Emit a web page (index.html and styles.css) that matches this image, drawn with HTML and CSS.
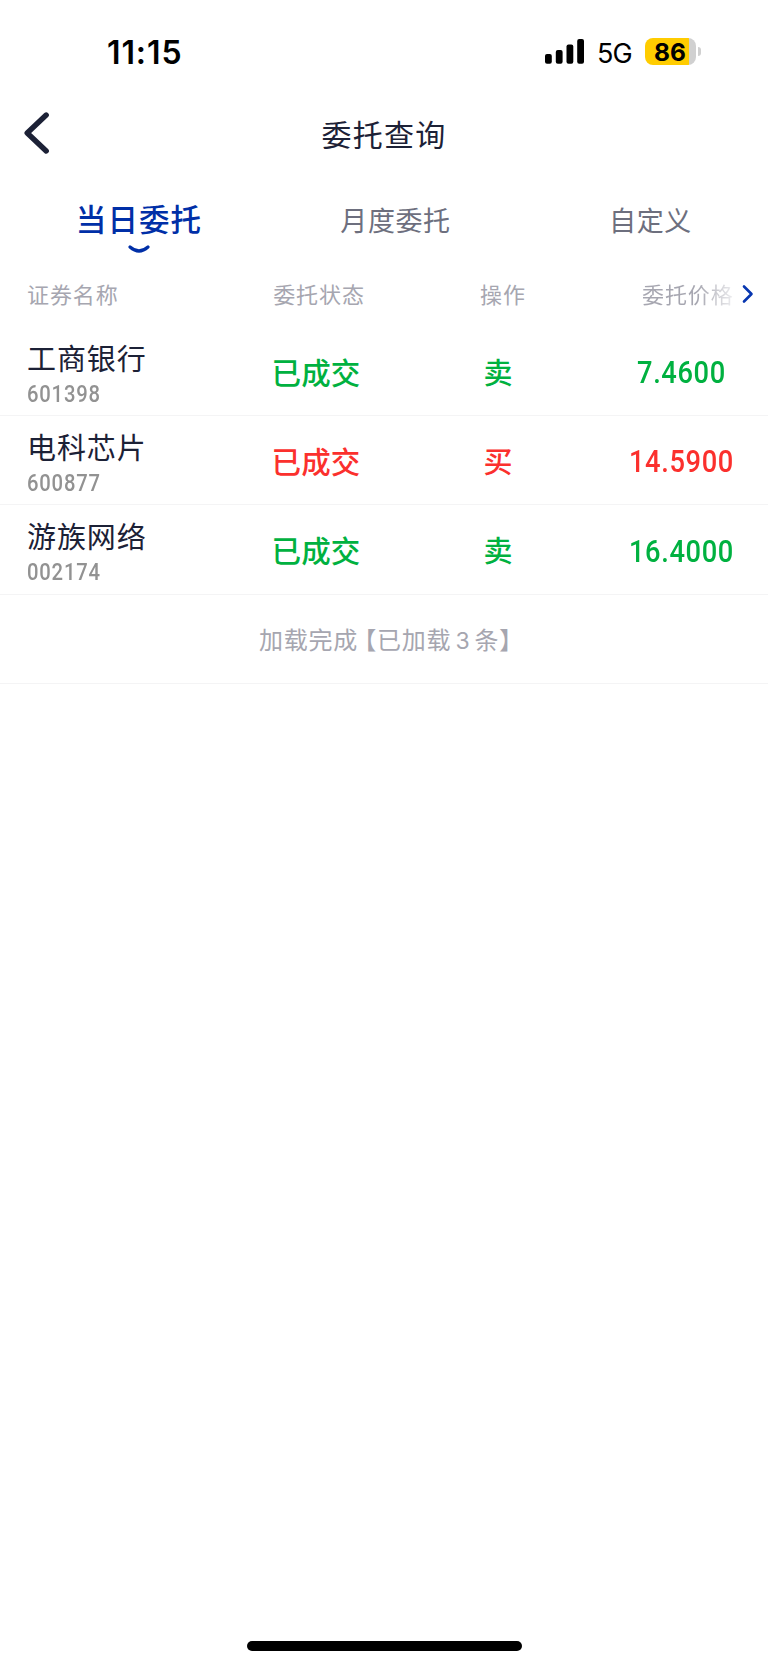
FILE: index.html
```html
<!DOCTYPE html>
<html lang="zh-CN">
<head>
    <meta charset="UTF-8">
    <meta name="viewport" content="width=device-width, initial-scale=1.0">
    <title>委托查询</title>
    <link rel="stylesheet" href="styles.css">
</head>
<body>
    <div class="status-bar">
        <span class="clock">11:15</span>
        <div class="status-icons">
            <svg class="signal" width="39" height="25" viewBox="0 0 39 25">
                <rect x="0" y="15" width="6.8" height="9.8" rx="2"/>
                <rect x="10.8" y="11" width="6.8" height="13.8" rx="2"/>
                <rect x="21.5" y="5.6" width="6.8" height="19.2" rx="2"/>
                <rect x="32.2" y="0" width="6.8" height="24.8" rx="2"/>
            </svg>
            <span class="network">5G</span>
            <div class="battery"><span>86</span></div>
            <div class="battery-cap"></div>
        </div>
    </div>

    <header>
        <a href="#" class="back">
            <svg width="26" height="42" viewBox="0 0 26 42">
                <path d="M22.2 3L3.2 21L22.2 39" fill="none" stroke="#1c2136" stroke-width="5.4" stroke-linecap="round" stroke-linejoin="round"/>
            </svg>
        </a>
        <h1>委托查询</h1>
    </header>

    <nav class="tabs">
        <a href="#day" class="tab active">当日委托
            <svg width="22" height="9" viewBox="0 0 22 9">
                <path d="M2 2Q11 10 20 2" fill="none" stroke="#002fa7" stroke-width="3.2" stroke-linecap="round"/>
            </svg>
        </a>
        <a href="#month" class="tab">月度委托</a>
        <a href="#custom" class="tab">自定义</a>
    </nav>

    <main>
        <div class="row table-head">
            <div class="name">证券名称</div>
            <div class="state">委托状态</div>
            <div class="action">操作</div>
            <div class="price">
                <span class="fade">委托价格</span>
                <svg width="12" height="20" viewBox="0 0 12 20">
                    <path d="M2 2.5L9.5 10L2 17.5" fill="none" stroke="#0736b0" stroke-width="2.6" stroke-linecap="round" stroke-linejoin="round"/>
                </svg>
            </div>
        </div>
        <div class="row order sell">
            <div class="name">工商银行<span class="code">601398</span></div>
            <div class="state">已成交</div>
            <div class="action">卖</div>
            <div class="price">7.4600</div>
        </div>
        <div class="row order buy">
            <div class="name">电科芯片<span class="code">600877</span></div>
            <div class="state">已成交</div>
            <div class="action">买</div>
            <div class="price">14.5900</div>
        </div>
        <div class="row order sell">
            <div class="name">游族网络<span class="code">002174</span></div>
            <div class="state">已成交</div>
            <div class="action">卖</div>
            <div class="price">16.4000</div>
        </div>
        <p class="loaded">加载完成<span class="bracket">【</span>已加载<span class="count">3</span>条】</p>
    </main>

    <footer>
        <div class="home-indicator"></div>
    </footer>
</body>
</html>
```

FILE: styles.css
```css
* {
    box-sizing: border-box;
}
body {
    margin: 0;
    min-height: 1665px;
    display: flex;
    flex-direction: column;
    background-color: #fff;
    color: #1c2136;
    font-family: "Noto Sans CJK SC", sans-serif;
}
a {
    color: inherit;
    text-decoration: none;
}
svg {
    display: block;
}
.status-bar {
    height: 90px;
    padding: 33px 67px 0 107px;
    display: flex;
    justify-content: space-between;
    align-items: flex-start;
    color: #000;
    font-family: Inter, sans-serif;
}
.clock {
    font-size: 32px;
    line-height: 40px;
    font-weight: 600;
    letter-spacing: 0.9px;
}
.status-icons {
    display: flex;
    padding-top: 5px;
}
.signal {
    margin-top: 1px;
}
.network {
    margin-left: 13px;
    width: 48px;
    font-size: 27px;
    line-height: 31px;
    letter-spacing: -0.8px;
}
.battery {
    width: 51px;
    height: 27px;
    border-radius: 8px;
    background: linear-gradient(to right, #fc0 44px, #d0d0d0 44px);
    font-size: 24.5px;
    line-height: 28px;
    font-weight: 700;
    padding-left: 9px;
}
.battery-cap {
    width: 3px;
    height: 9px;
    margin: 9px 0 0 2px;
    border-radius: 0 4px 4px 0;
    background-color: #d0d0d0;
}
header {
    height: 90px;
    display: grid;
    grid-template-columns: 100px 1fr 100px;
    align-items: start;
}
.back {
    padding: 22px 0 0 24px;
}
h1 {
    margin: 0;
    padding-top: 21px;
    text-align: center;
    font-size: 30px;
    line-height: 44px;
    font-weight: 400;
    letter-spacing: 1.2px;
}
.tabs {
    height: 88px;
    display: grid;
    grid-template-columns: 278px 235px 1fr;
    text-align: center;
}
.tab {
    padding-top: 18px;
    font-size: 27px;
    line-height: 44px;
    letter-spacing: 0.6px;
    color: #6d6f7e;
}
.tab:last-child {
    padding-left: 20px;
}
.tab.active {
    padding-top: 16px;
    font-size: 30.5px;
    font-weight: 500;
    letter-spacing: 1.1px;
    color: #002fa7;
}
.tab svg {
    margin: 5px auto 0;
}
.row {
    display: grid;
    grid-template-columns: 215px 202px 162px 1fr;
    align-items: center;
    text-align: center;
}
.name {
    padding-left: 27px;
    text-align: left;
}
.table-head {
    height: 58.4px;
    padding-bottom: 8px;
    font-size: 22px;
    line-height: 30px;
    letter-spacing: 0.9px;
    color: #a6a6b0;
}
.table-head .state {
    padding-left: 6px;
}
.table-head .action {
    padding-left: 10px;
}
.table-head .price {
    display: flex;
    align-items: center;
    padding-left: 63px;
}
.table-head .price svg {
    margin: 2px 0 0 8px;
}
.fade {
    color: transparent;
    background: linear-gradient(to right, #a6a6b0 60%, #eeeef0);
    background-clip: text;
    -webkit-background-clip: text;
}
.order {
    height: 89.4px;
    border-bottom: 1.5px solid #f4f4f5;
    font-size: 29px;
    line-height: 40px;
}
.order .name {
    padding-top: 8px;
    letter-spacing: 0.9px;
}
/* narrow digits for codes and prices */
.code {
    display: block;
    font: 500 23px/38px Roboto, sans-serif;
    margin: -1px 0 -1px;
    letter-spacing: 0.9px;
    color: #929292;
    transform: scaleX(0.88);
    transform-origin: left;
}
.order .state,
.order .action {
    padding-top: 0;
    font-weight: 500;
}
.order .state {
    font-size: 29.5px;
    letter-spacing: 0.2px;
}
.order .price {
    padding: 5px 0 0 18px;
    font-family: Roboto, sans-serif;
    font-size: 31px;
    font-weight: 500;
    letter-spacing: 0.7px;
    transform: scaleX(0.88);
}
.sell {
    color: #00b140;
}
.buy {
    color: #fb302d;
}
.sell .name,
.buy .name {
    color: #1c2136;
}
.loaded {
    height: 89.4px;
    margin: 0;
    padding: 26px 0 0 15px;
    border-bottom: 1.5px solid #f4f4f5;
    text-align: center;
    font-size: 24px;
    line-height: 36px;
    letter-spacing: 0.8px;
    color: #a6a6b0;
}
.bracket {
    margin-left: 6px;
    font-feature-settings: "halt";
}
.count {
    margin: 0 4px;
    font-family: Inter, sans-serif;
    font-size: 23px;
}
footer {
    margin-top: auto;
    padding-bottom: 14px;
}
.home-indicator {
    width: 275px;
    height: 10px;
    margin: 0 auto;
    border-radius: 5px;
    background-color: #000;
}
```
